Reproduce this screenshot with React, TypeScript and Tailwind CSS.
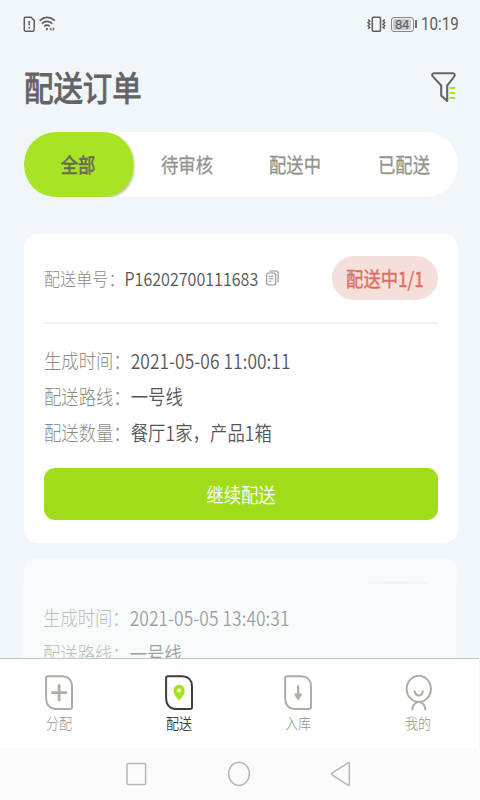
import type { ReactNode } from "react";

const TABS = ["全部", "待审核", "配送中", "已配送"];

function StatusBar() {
  return (
    <div className="flex h-12 shrink-0 items-center pl-[23px] pr-[20px] text-[#5c5e60]">
      <svg width="13" height="17" viewBox="0 0 13 17" fill="none" stroke="#5c5e60" strokeWidth="1.5">
        <path d="M2.6 1.2H8L11.2 4.6V13.8Q11.2 15.2 9.9 15.2H2.6Q1.3 15.2 1.3 13.8V2.6Q1.3 1.2 2.6 1.2Z" />
        <path d="M6.2 5V9.5M6.2 11V12.8" />
      </svg>
      <svg className="ml-[3px]" width="17" height="17" viewBox="0 0 17 17" fill="none" stroke="#5c5e60" strokeWidth="1.7">
        <path d="M.6 4.6Q8 -1.7 15.8 4.6M2.9 7.6Q8 3.2 13.3 7.6M5.2 10.4Q8 8 10.8 10.4" />
        <path d="M8 11.5L9.3 13.1L8 14.7L6.7 13.1ZM12.4 11.2V15L10.5 13.1ZM13.8 11.2V15L15.7 13.1Z" fill="#5c5e60" stroke="none" />
      </svg>
      <svg className="ml-auto" width="19" height="17" viewBox="0 0 19 17" fill="none" stroke="#5c5e60" strokeWidth="1.5">
        <rect x="5.3" y="1.2" width="8.2" height="14" rx="1" />
        <path d="M1 3.5L2.8 5L1 6.6L2.8 8.2L1 9.8L2.8 11.4L1 12.8M17.8 3.5L16 5L17.8 6.6L16 8.2L17.8 9.8L16 11.4L17.8 12.8" strokeWidth="1.4" />
      </svg>
      <div className="ml-[5px] flex h-[15px] w-[23px] items-center rounded-[3px] border border-[#858789] p-px">
        <div className="flex h-full w-[18px] items-center justify-center rounded-[2px] bg-[#c6cacd]">
          <span className="font-[Roboto,sans-serif] text-[13px] leading-none tracking-[-.3px]">84</span>
        </div>
      </div>
      <div className="ml-px h-2 w-[2px] bg-[#6b6d6f]" />
      <div className="ml-[4px] w-[39px] font-[Roboto,sans-serif] text-[18px] leading-6">
        <span className="inline-block origin-left scale-x-[.84]">10:19</span>
      </div>
    </div>
  );
}

function FilterIcon() {
  return (
    <svg width="27" height="33" viewBox="0 0 27 33" fill="none">
      <path d="M3.9 2.2H22.7Q25 2.2 24.7 4.6Q24.5 5.6 17.2 14.4V30L11.2 24.6V14.4Q3.4 6.4 2.4 4.8Q1.6 2.4 3.9 2.2Z" stroke="#666" strokeWidth="2.1" strokeLinejoin="round" />
      <path d="M20.2 17H24.4M20.2 22H24.4M20.2 27H24.4" stroke="#a9e424" strokeWidth="2.1" strokeLinecap="round" />
    </svg>
  );
}

function CopyIcon() {
  return (
    <svg className="ml-[7px] -translate-y-px" width="13" height="16" viewBox="0 0 13 16" fill="none" stroke="#92938a" strokeWidth="1.1">
      <path d="M3.4 1H10.2Q12.1 1 12.1 3V12.6" />
      <rect x=".7" y="3" width="9" height="12" rx="1.8" />
      <path d="M2.8 6.2H7.6M2.8 8.7H7.6M2.8 11.2H5.4" />
    </svg>
  );
}

function InfoRow({ label, value }: { label: string; value: string }) {
  return (
    <div className="h-9 origin-left scale-x-[.867] text-xl leading-9 whitespace-nowrap">
      <span className="font-light text-[#8c8d82]">{label}：</span>
      <span className="font-[350] tracking-[.09px] text-[#555]">{value}</span>
    </div>
  );
}

function LeafIcon({ color, children }: { color: string; children: ReactNode }) {
  return (
    <svg width="30" height="36" viewBox="0 0 30 36" fill="none" stroke={color}>
      <path d="M3.9 1.2H18.5Q28 1.8 28 11.5V31.7Q28 34 26 34H11Q2.1 33 2.1 23V3Q2.1 1.2 3.9 1.2Z" strokeWidth="2" />
      {children}
    </svg>
  );
}

const NAV = [
  {
    label: "分配",
    icon: (
      <LeafIcon color="#adaea3">
        <path d="M15.1 10.3V25.2M8.4 17.7H21.9" strokeWidth="2.8" strokeLinecap="round" />
      </LeafIcon>
    ),
  },
  {
    label: "配送",
    active: true,
    icon: (
      <LeafIcon color="#3d3d3a">
        <path d="M15.1 25.5Q9.5 20.1 9.5 15.5A5.6 5.8 0 0 1 20.7 15.5Q20.7 20.1 15.1 25.5Z" fill="#a4e31c" stroke="none" />
        <ellipse cx="15.1" cy="15.6" rx="1.9" ry="2" fill="#fff" stroke="none" />
      </LeafIcon>
    ),
  },
  {
    label: "入库",
    icon: (
      <LeafIcon color="#adaea3">
        <path d="M15.1 11.2V20" strokeWidth="2.2" strokeLinecap="round" />
        <path d="M11.8 19.2H18.5L15.1 24.6Z" fill="#adaea3" strokeWidth="1.2" strokeLinejoin="round" />
      </LeafIcon>
    ),
  },
  {
    label: "我的",
    icon: (
      <svg width="30" height="36" viewBox="-.9 0 30 36" fill="none" stroke="#adaea3" strokeWidth="2" strokeLinecap="round">
        <ellipse cx="14.9" cy="13.9" rx="12.1" ry="13.1" />
        <path d="M10.8 16.2Q11.6 20.4 14.9 20.4Q18.2 20.4 19 16.2M8.4 34.3Q8.8 29.5 12.6 27.6M21.4 34.3Q21 29.5 17.2 27.6" />
      </svg>
    ),
  },
];

export default function App() {
  return (
    <div className="flex h-[800px] w-[480px] flex-col overflow-hidden bg-[#f1f6fa] font-['Noto_Sans_CJK_SC',sans-serif]">
      <StatusBar />
      <header className="flex h-[84px] shrink-0 items-start justify-between pt-[23px] pr-[23px] pl-6">
        <h1 className="origin-left scale-x-[.865] text-[34px] leading-8 text-[#646464] [-webkit-text-stroke:1px_#646464]">配送订单</h1>
        <FilterIcon />
      </header>

      <div className="mr-[22px] ml-6 grid h-[65px] shrink-0 grid-cols-4 overflow-hidden rounded-[32px] bg-white">
        {TABS.map((tab, i) => (
          <div
            key={tab}
            className={
              i === 0
                ? "flex items-center justify-center rounded-[30px] bg-[#a9e424] pt-px text-[#666b52] shadow-[2px_2px_3px_-1px_#aebf90]"
                : "flex items-center justify-center pt-px text-[#92938a]"
            }
          >
            <span className={i === 0 ? "scale-x-[.865] text-xl leading-none [-webkit-text-stroke:.6px_#666b52]" : "scale-x-[.865] text-xl leading-none [-webkit-text-stroke:.3px_#92938a]"}>{tab}</span>
          </div>
        ))}
      </div>

      <main className="min-h-0 flex-1 overflow-hidden pt-[37px]">
        <section className="mr-[22px] ml-6 h-[309px] rounded-[14px] bg-white px-5 pt-[22px]">
          <div className="flex h-[68px] items-start border-b-2 border-[#eff2f4]">
            <div className="flex h-[45px] flex-1 items-center">
              <div className="w-[215px] text-[18.5px] leading-none whitespace-nowrap">
                <div className="origin-left scale-x-[.87]">
                  <span className="font-light text-[#8c8d82]">配送单号：</span>
                  <span className="font-[350] text-[#555]">P16202700111683</span>
                </div>
              </div>
              <CopyIcon />
            </div>
            <div className="flex h-11 w-[106px] items-center justify-center rounded-full bg-[#f5dfdb] pt-px text-[#dd705d]">
              <span className="scale-x-[.865] text-xl leading-none whitespace-nowrap [-webkit-text-stroke:.4px_#dd705d]">配送中1/1</span>
            </div>
          </div>
          <div className="pt-[19px]">
            <InfoRow label="生成时间" value="2021-05-06 11:00:11" />
            <InfoRow label="配送路线" value="一号线" />
            <InfoRow label="配送数量" value="餐厅1家，产品1箱" />
          </div>
          <button className="mt-[17px] flex h-[52px] w-full items-center justify-center rounded-[11px] bg-[#a1dc1b] pt-0.5 text-white">
            <span className="scale-x-[.865] text-xl leading-none font-[350]">继续配送</span>
          </button>
        </section>

        <section className="mt-[15px]">
          <div className="mr-[22px] ml-6 flex h-[26px] items-end justify-end rounded-t-[14px] bg-[#f7fbfc] pr-[30px]">
            <div className="h-[3px] w-[60px] rounded-t-[50%] bg-[#f1f5f8]" />
          </div>
          <div className="mr-6 ml-[22px] h-[90px] bg-[#f7fbfc] pt-4 pl-[21px]">
            <div className="opacity-55">
              <InfoRow label="生成时间" value="2021-05-05 13:40:31" />
              <InfoRow label="配送路线" value="一号线" />
            </div>
          </div>
        </section>
      </main>

      <nav className="mr-px grid h-[90px] shrink-0 grid-cols-4 border-t border-[#bcc3c6] bg-white">
        {NAV.map((item) => (
          <div key={item.label} className="flex flex-col items-center pt-4 pr-0.5">
            {item.icon}
            <span className={item.active ? "mt-[4px] scale-x-[.87] text-[15px] leading-4 font-[350] text-[#3d3d3a]" : "mt-[4px] scale-x-[.87] text-[15px] leading-4 font-light text-[#94958a]"}>
              {item.label}
            </span>
          </div>
        ))}
      </nav>

      <footer className="flex h-[52px] shrink-0 items-center bg-[#fbfbfb] pl-[125px]">
        <svg width="230" height="28" viewBox="0 0 230 28" fill="none" stroke="#b7b7b7" strokeWidth="1.5" strokeLinejoin="round">
          <rect x="2" y="3.6" width="18.6" height="20.8" rx="1" />
          <ellipse cx="114" cy="13.8" rx="10.4" ry="11.6" />
          <path d="M207 13.2Q206.2 14 207 14.8L223 25.2Q224.3 25.6 224.3 24V3.7Q224.3 2.2 223 2.8Z" />
        </svg>
      </footer>
    </div>
  );
}
